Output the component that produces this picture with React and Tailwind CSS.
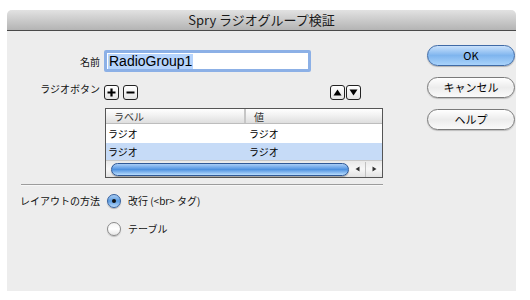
import React from "react";

const jp = { fontFamily: '"Noto Sans CJK JP", "Noto Sans", sans-serif' };

// aqua pill button
function PillButton({ label, primary }) {
  return (
    <div
      className={
        "h-[21px] w-[88px] rounded-full border flex items-center justify-center text-[11px] text-black " +
        (primary
          ? "border-[#3f6aa6] bg-gradient-to-b from-[#c9e1fb] via-[#7fb5ee] to-[#a9d3fb] shadow-[0_1px_1px_rgba(0,0,0,0.25)]"
          : "border-[#7a7a7a] bg-gradient-to-b from-[#ffffff] via-[#ececec] to-[#fafafa] shadow-[0_1px_1px_rgba(0,0,0,0.2)]")
      }
      style={jp}
    >
      {label}
    </div>
  );
}

function SmallButton({ children }) {
  return (
    <div className="w-[15px] h-[15px] rounded-[3px] border border-[#222] bg-gradient-to-b from-white to-[#e4e4e4] flex items-center justify-center">
      {children}
    </div>
  );
}

function Radio({ checked }) {
  return checked ? (
    <div className="w-[14px] h-[14px] rounded-full border border-[#35609e] bg-gradient-to-b from-[#a8cdf4] via-[#5b9be0] to-[#b9dbfb] flex items-center justify-center shadow-[0_1px_1px_rgba(0,0,0,0.25)]">
      <div className="w-[4px] h-[4px] rounded-full bg-[#111]" />
    </div>
  ) : (
    <div className="w-[14px] h-[14px] rounded-full border border-[#8a8a8a] bg-gradient-to-b from-[#f4f4f4] via-[#ffffff] to-[#e6e6e6] shadow-[0_1px_1px_rgba(0,0,0,0.2)]" />
  );
}

export default function App() {
  const rows = [
    { label: "ラジオ", value: "ラジオ", sel: false },
    { label: "ラジオ", value: "ラジオ", sel: true },
  ];

  return (
    <div className="w-[530px] h-[300px] bg-white pt-[10px] pl-[7px]" style={jp}>
      <div className="w-[509px] h-[281px] rounded-t-[5px] overflow-hidden bg-[#ededed] flex flex-col">
        {/* title bar */}
        <div className="h-[21px] shrink-0 border-b border-[#4a4a4a] bg-gradient-to-b from-[#e2e2e2] to-[#b4b4b4] flex items-center justify-center pb-[1px]">
          <span className="text-[13px] text-[#1a1a1a] leading-none">Spry ラジオグループ検証</span>
        </div>

        <div className="flex flex-1">
          {/* left */}
          <div className="w-[376px] flex flex-col">
            <div className="mt-[19px] flex items-center">
              <div className="w-[93px] text-right text-[10px] text-[#111]">名前</div>
              <div className="ml-[4px] w-[207px] h-[22px] rounded-[2px] border-[3px] border-[#8cb0e6] bg-white flex items-center pl-[1px]">
                <span
                  className="bg-[#b6d4fd] text-[14px] leading-[15px] text-black px-[1px]"
                  style={{ fontFamily: '"Liberation Sans", Arial, sans-serif' }}
                >
                  RadioGroup1
                </span>
              </div>
            </div>

            <div className="mt-[13px] flex items-start h-[15px]">
              <div className="w-[93px] text-right text-[10px] text-[#111] leading-[12px] -mt-[2px]">ラジオボタン</div>
              <div className="ml-[4px] flex gap-[4px]">
                <SmallButton>
                  <svg width="9" height="9" viewBox="0 0 9 9">
                    <path d="M4.5 0.5v8M0.5 4.5h8" stroke="#000" strokeWidth="2.2" />
                  </svg>
                </SmallButton>
                <SmallButton>
                  <svg width="9" height="9" viewBox="0 0 9 9">
                    <path d="M0.5 4.5h8" stroke="#000" strokeWidth="1.8" />
                  </svg>
                </SmallButton>
              </div>
              <div className="ml-auto mr-[22px] flex gap-[1px]">
                <SmallButton>
                  <svg width="9" height="7" viewBox="0 0 9 7">
                    <path d="M4.5 0.5L8.5 6.5H0.5Z" fill="#000" />
                  </svg>
                </SmallButton>
                <SmallButton>
                  <svg width="9" height="7" viewBox="0 0 9 7">
                    <path d="M0.5 0.5H8.5L4.5 6.5Z" fill="#000" />
                  </svg>
                </SmallButton>
              </div>
            </div>

            {/* table */}
            <div className="mt-[8px] ml-[98px] w-[278px] border border-[#555] bg-white flex flex-col">
              <div className="h-[15px] flex border-b border-[#bdbdbd] bg-gradient-to-b from-[#ffffff] via-[#f0f0f0] to-[#dedede] text-[10px] text-[#333] leading-[15px]">
                <div className="w-[140px] pl-[8px] border-r-2 border-[#c6c6c6]">ラベル</div>
                <div className="flex-1 pl-[8px]">値</div>
              </div>
              {rows.map((r, i) => (
                <div
                  key={i}
                  className={
                    "flex text-[10px] text-black items-center " +
                    (i === 0 ? "h-[19px] " : "h-[17px] ") +
                    (r.sel ? "bg-[#c6dbf7]" : "bg-white")
                  }
                >
                  <div className="w-[141px] pl-[2px]">{r.label}</div>
                  <div className="flex-1 pl-[2px]">{r.value}</div>
                </div>
              ))}
              <div className="h-[17px] flex items-center bg-gradient-to-b from-[#e9e9e9] via-[#f7f7f7] to-[#e2e2e2] border-t border-[#c8c8c8]">
                <div className="ml-[5px] w-[240px] h-[13px] rounded-full border border-[#2f5896] bg-gradient-to-b from-[#a9cdf6] via-[#4f92e0] to-[#b8dcfd] shadow-[0_1px_1px_rgba(0,0,0,0.3)]" />
                <div className="ml-auto flex h-full items-center">
                  <div className="w-[16px] flex justify-center">
                    <svg width="5" height="6" viewBox="0 0 5 6">
                      <path d="M4.5 0.5V5.5L0.5 3Z" fill="#333" />
                    </svg>
                  </div>
                  <div className="w-px h-[15px] bg-[#c0c0c0]" />
                  <div className="w-[16px] flex justify-center">
                    <svg width="5" height="6" viewBox="0 0 5 6">
                      <path d="M0.5 0.5V5.5L4.5 3Z" fill="#333" />
                    </svg>
                  </div>
                </div>
              </div>
            </div>

            <div className="mt-[6px] ml-[14px] h-px bg-[#9c9c9c]" />
            <div className="ml-[14px] h-px bg-[#f8f8f8]" />

            <div className="mt-[7px] flex items-center">
              <div className="w-[93px] text-right text-[10px] text-[#111]">レイアウトの方法</div>
              <div className="ml-[7px]">
                <Radio checked />
              </div>
              <div className="ml-[7px] text-[10px] text-[#111]">改行 (&lt;br&gt; タグ)</div>
            </div>
            <div className="mt-[13px] flex items-center">
              <div className="w-[93px]" />
              <div className="ml-[7px]">
                <Radio />
              </div>
              <div className="ml-[7px] text-[10px] text-[#111]">テーブル</div>
            </div>
          </div>

          {/* right buttons */}
          <div className="ml-[44px] mt-[14px] flex flex-col gap-[11px]">
            <PillButton label="OK" primary />
            <PillButton label="キャンセル" />
            <PillButton label="ヘルプ" />
          </div>
        </div>
      </div>
    </div>
  );
}
